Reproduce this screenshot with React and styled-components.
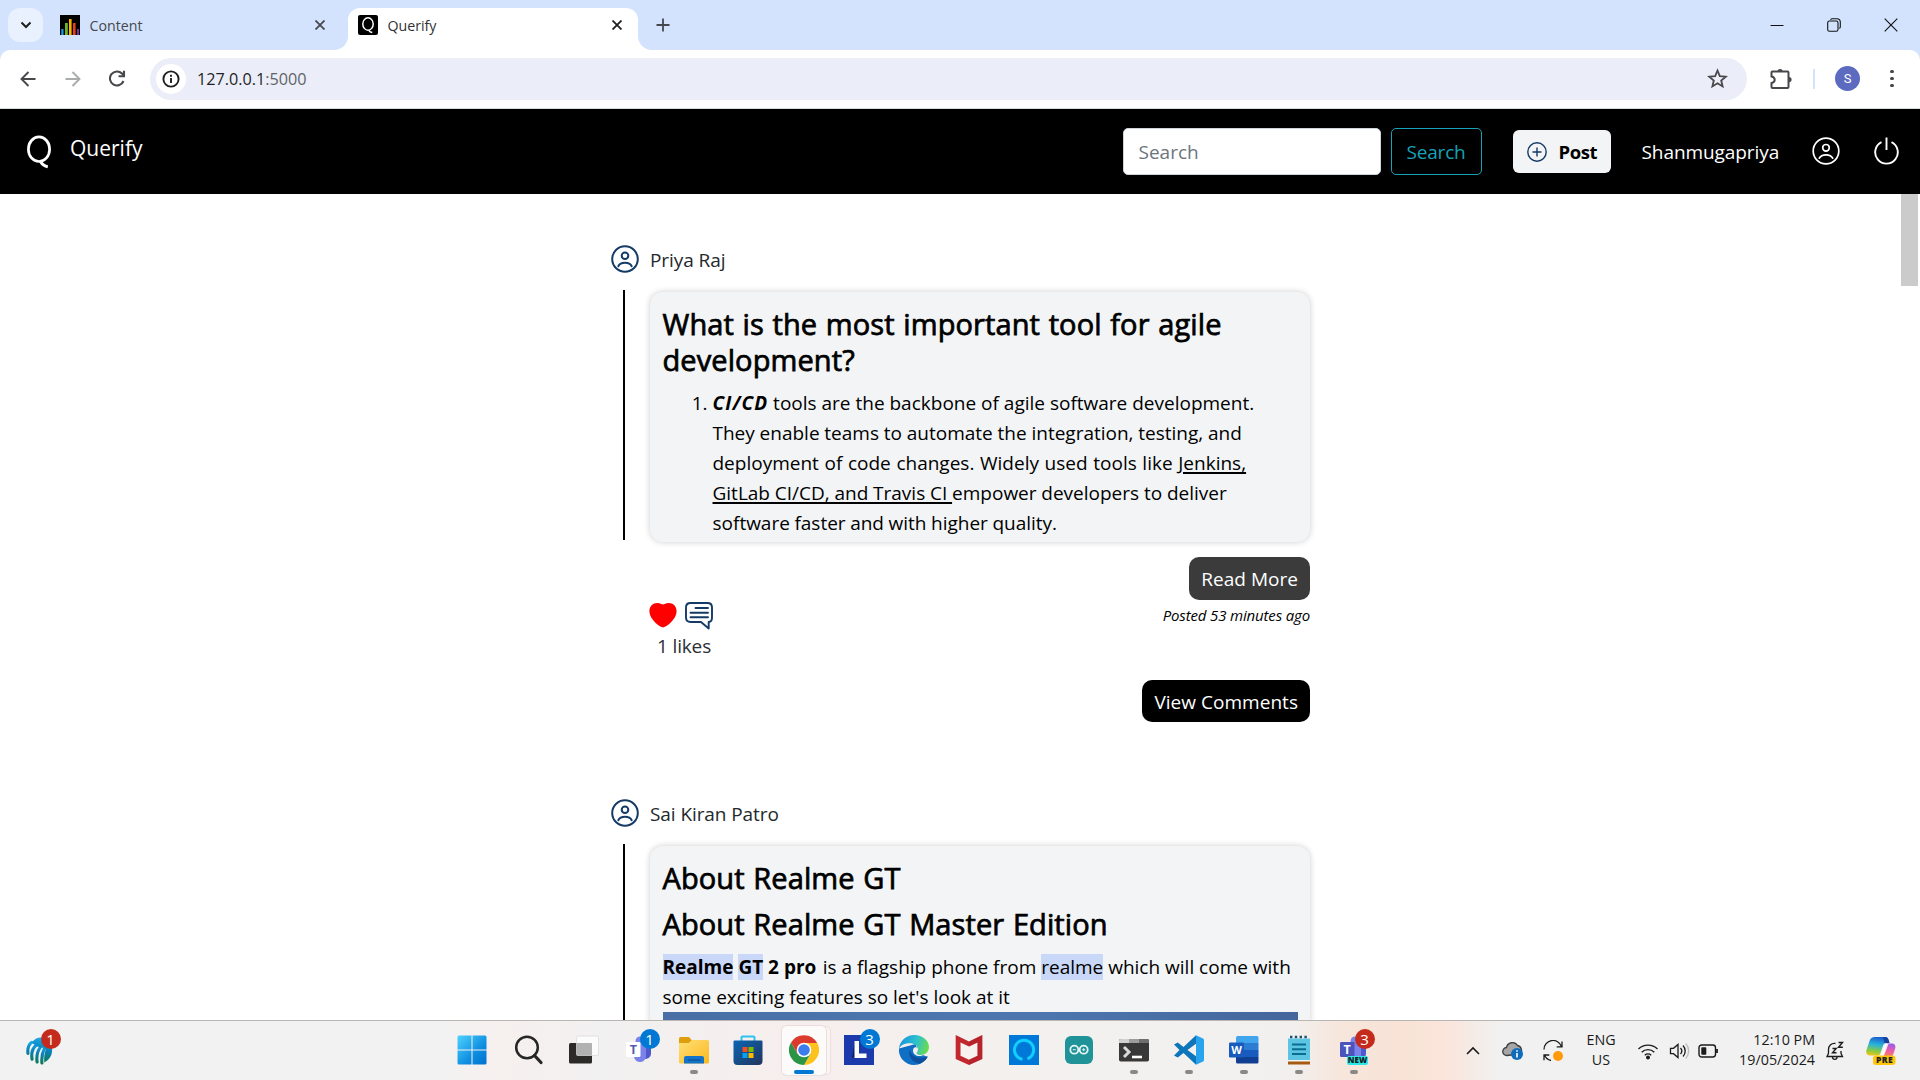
import React from 'react';
import styled, { createGlobalStyle, css } from 'styled-components';

const Global = createGlobalStyle`
  *, *::before, *::after { box-sizing: border-box; }
  body { margin: 0; overflow: hidden; background: #fff; }
  svg { display: block; flex: none; }
`;

const Screen = styled.div`
  width: 1920px;
  height: 1080px;
  display: flex;
  flex-direction: column;
  overflow: hidden;
  font-family: "Open Sans", "Noto Sans", sans-serif;
  font-size: 19px;
  color: #000;
  background: #fff;
`;

/* ---------- browser chrome ---------- */
const TabStrip = styled.div`
  height: 50px;
  flex: none;
  display: flex;
  align-items: flex-start;
  padding: 8px 1px 0 8px;
  background: #d3e3fd;
`;

const TabSearch = styled.div`
  width: 35px;
  height: 34px;
  border-radius: 12px;
  background: #e9f1fe;
  display: flex;
  align-items: center;
  justify-content: center;
`;

const Tab = styled.div`
  position: relative;
  height: 42px;
  display: flex;
  align-items: center;
  padding-bottom: 8px;
  font-size: 14.2px;
  color: #46484b;
  padding-left: 10px;
  padding-right: ${(p) => p.$end}px;
  width: ${(p) => p.$width}px;
  margin-left: ${(p) => p.$gap}px;
  ${(p) =>
    p.$active &&
    css`
      background: #fff;
      border-radius: 12px 12px 0 0;
      color: #303235;
      &::before,
      &::after {
        content: '';
        position: absolute;
        bottom: 0;
        width: 14px;
        height: 14px;
      }
      &::before {
        left: -14px;
        background: radial-gradient(circle at 0 0, transparent 13.5px, #fff 14.5px);
      }
      &::after {
        right: -14px;
        background: radial-gradient(circle at 100% 0, transparent 13.5px, #fff 14.5px);
      }
    `}
`;

const TabTitle = styled.span`
  flex: 1;
  margin: 1px 0 0 9.5px;
  line-height: 20px;
`;

const NewTab = styled.div`
  margin-left: 18px;
  width: 14px;
  height: 34px;
  display: flex;
  align-items: center;
`;

const WindowControls = styled.div`
  margin-left: auto;
  height: 34px;
  display: flex;
  align-items: center;
`;

const WindowButton = styled.div`
  width: 57px;
  display: flex;
  justify-content: center;
`;

const ToolbarBack = styled.div`
  flex: none;
  background: #d3e3fd;
`;

const Toolbar = styled.div`
  height: 59px;
  display: flex;
  align-items: center;
  padding: 0 16px 1px 15px;
  background: #fff;
  border-radius: 10px 10px 0 0;
  border-bottom: 1px solid #d5dedd;
`;

const NavIcon = styled.div`
  width: 26px;
  height: 26px;
  margin-right: 19px;
  display: flex;
  align-items: center;
  justify-content: center;
`;

const Omnibox = styled.div`
  width: 1597px;
  height: 42px;
  border-radius: 21px;
  background: #ebeef8;
  display: flex;
  align-items: center;
  padding: 0 19px 0 6px;
`;

const SiteInfo = styled.div`
  width: 30px;
  height: 30px;
  border-radius: 50%;
  background: #fff;
  display: flex;
  align-items: center;
  justify-content: center;
`;

const Url = styled.span`
  flex: 1;
  margin: 1px 0 0 11px;
  font-size: 16.2px;
  line-height: 24px;
  color: #1f1f1f;
  span { color: #5f6368; }
`;

const ToolbarActions = styled.div`
  flex: 1;
  display: flex;
  align-items: center;
  padding-left: 23px;
`;

const Divider = styled.div`
  width: 2px;
  height: 20px;
  margin: 0 20px 0 21px;
  background: #d3e3fd;
`;

const Avatar = styled.div`
  width: 25px;
  height: 25px;
  border-radius: 50%;
  background: #5c6bc0;
  color: #fff;
  font: 13px/25px Roboto, sans-serif;
  text-align: center;
`;

const Dots = styled.div`
  margin-left: auto;
  margin-right: 10px;
  display: grid;
  gap: 3.3px;
  i { width: 3.8px; height: 3.8px; border-radius: 50%; background: #454746; }
`;

/* ---------- site header ---------- */
const SiteHeader = styled.header`
  height: 85px;
  flex: none;
  display: flex;
  align-items: center;
  background: #000;
  color: #fff;
  padding: 0 21.5px 0 26px;
`;

const Brand = styled.div`
  flex: 1;
  display: flex;
  align-items: center;
  font-size: 21px;
  line-height: 30px;
  span { margin: -7px 0 0 18px; }
`;

const SearchInput = styled.div`
  width: 258px;
  height: 47px;
  border: 1px solid #ced4da;
  border-radius: 5px;
  background: #fff;
  color: #6c757d;
  line-height: 46px;
  padding-left: 15px;
`;

const SearchButton = styled.div`
  width: 91px;
  height: 47px;
  margin-left: 10px;
  border: 1px solid #17a2b8;
  border-radius: 5px;
  color: #17a2b8;
  line-height: 46px;
  text-align: center;
  letter-spacing: -0.2px;
`;

const PostButton = styled.div`
  width: 98px;
  height: 43px;
  margin: 0 0 0 31px;
  border-radius: 6px;
  background: #f2f4f6;
  color: #000;
  font-weight: 700;
  font-size: 18.5px;
  letter-spacing: -0.4px;
  display: flex;
  align-items: center;
  padding-left: 14px;
  gap: 12px;
`;

const UserName = styled.span`
  width: 137px;
  margin: 1px 33px 0 31px;
  letter-spacing: -0.08px;
  white-space: nowrap;
`;

const HeaderIcon = styled.div`
  margin: -1px 0 0 ${(p) => p.$left || 0}px;
`;

/* ---------- feed ---------- */
const Page = styled.main`
  flex: 1;
  min-height: 0;
  display: flex;
  overflow: hidden;
`;

const Feed = styled.div`
  flex: 1;
  padding: 51px 0 0 611px;
`;

const Scrollbar = styled.div`
  width: 19px;
  &::before {
    content: '';
    display: block;
    width: 17px;
    height: 92px;
    background: #cbcbcb;
  }
`;

const Post = styled.article`
  width: 699px;
  height: 553.5px;
`;

const Author = styled.div`
  display: flex;
  align-items: center;
  height: 28px;
  gap: 11px;
  color: #24282c;
  letter-spacing: -0.08px;
  span { line-height: 30px; margin-top: 2px; }
`;

const Thread = styled.div`
  display: flex;
  margin-top: 17px;
`;

const ThreadLine = styled.div`
  width: 2px;
  height: 250px;
  margin: 0 25px 0 12px;
  background: #000;
`;

const Card = styled.div`
  width: 660px;
  height: 250px;
  margin-top: 2px;
  padding: 14px 12px 0 12.5px;
  overflow: hidden;
  border-radius: 13px;
  background: #f2f4f6;
  box-shadow: 0 0 6px rgba(0, 0, 0, 0.2);
`;

const Title = styled.h4`
  margin: 0 0 10px;
  font-size: 29px;
  line-height: 36px;
  font-weight: 500;
  letter-spacing: 0.1px;
  word-spacing: 1px;
  -webkit-text-stroke: 0.75px #000;
`;

const Answer = styled.ol`
  margin: 0;
  padding-left: 50px;
  line-height: 30px;
  li { white-space: nowrap; }
`;

const Term = styled.b`
  font-style: italic;
  letter-spacing: 1.1px;
`;

const Line = styled.span`
  display: block;
  word-spacing: ${(p) => p.$space || 0}px;
`;

const Underlined = styled.u`
  text-decoration-thickness: 2px;
  text-underline-offset: 2px;
`;

const Paragraph = styled.p`
  margin: 0;
  line-height: 30px;
  white-space: nowrap;
  b { margin-right: 1.5px; }
`;

const Mark = styled.mark`
  background: #c9d7f8;
  color: inherit;
  font-weight: inherit;
`;

const Photo = styled.div`
  height: 300px;
  margin-top: 0.5px;
  background: linear-gradient(90deg, #486ea5, #4c75ad 35%, #4d76ae 60%, #44669c);
`;

const PostFooter = styled.div`
  margin-left: 39px;
  display: flex;
  justify-content: space-between;
`;

const Reactions = styled.div`
  padding-top: 60px;
`;

const ReactionIcons = styled.div`
  display: flex;
  gap: 8px;
  margin-left: -1px;
`;

const Likes = styled.div`
  margin: 2px 0 0 7px;
  line-height: 28px;
  color: #2b2f33;
  letter-spacing: -0.15px;
`;

const Meta = styled.div`
  display: flex;
  flex-direction: column;
  align-items: flex-end;
  padding-top: 15px;
`;

const Pill = styled.div`
  height: ${(p) => p.$height}px;
  padding: 0 12px;
  border-radius: 10px;
  background: ${(p) => p.$bg};
  color: #fff;
  line-height: ${(p) => p.$height + 2}px;
  letter-spacing: 0.03px;
  white-space: nowrap;
`;

const Posted = styled.div`
  margin: 3px 0 52px;
  font-size: 15px;
  line-height: 25px;
  font-style: italic;
  letter-spacing: -0.15px;
`;

/* ---------- taskbar ---------- */
const Taskbar = styled.footer`
  height: 60px;
  flex: none;
  display: flex;
  border-top: 1px solid #b9b6b4;
  background: linear-gradient(
    90deg,
    #f2f2f2 0,
    #f2f2f2 440px,
    #f6f0ee 500px,
    #f2f1f1 600px,
    #f4efee 720px,
    #f6eeed 800px,
    #f4f0ed 930px,
    #f2f1ef 1150px,
    #f2f0ef 1290px,
    #f7e6dc 1340px,
    #f8e3d6 1400px,
    #fbe5db 1445px,
    #f4ece7 1475px,
    #f1f1f1 1500px
  );
`;

const Cell = styled.div`
  position: relative;
  width: 55px;
  height: 59px;
  display: flex;
  align-items: center;
  justify-content: center;
  margin-left: ${(p) => p.$left || 0}px;
`;

const AppTile = styled.div`
  width: 44px;
  height: 49px;
  display: flex;
  align-items: center;
  justify-content: center;
  border-radius: 5px;
  margin-top: -1px;
  padding-right: ${(p) => p.$shift || 0}px;
  background: ${(p) => (p.$on ? 'rgba(255,255,255,0.72)' : 'transparent')};
  box-shadow: ${(p) => (p.$on ? '0 0 0 1px #e9dedd, 5px 0 0 -1px #faf4f3, 5px 0 0 0 #ebdfdf' : 'none')};
`;

const Running = styled.div`
  position: absolute;
  top: 49px;
  width: ${(p) => (p.$on ? 20 : 8)}px;
  height: 4px;
  border-radius: 2px;
  background: ${(p) => (p.$on ? '#0078d4' : '#8a8886')};
`;

const Badge = styled.div`
  position: absolute;
  left: 28.5px;
  top: 8px;
  width: 20px;
  height: 20px;
  border-radius: 50%;
  background: ${(p) => p.$bg};
  color: #fff;
  font-size: 15px;
  line-height: 20px;
  text-align: center;
`;

const Tray = styled.div`
  display: flex;
  margin-left: 72px;
  height: 59px;
  align-items: center;
`;

const Slot = styled.div`
  width: ${(p) => p.$w}px;
  display: flex;
  justify-content: ${(p) => (p.$end ? 'flex-end' : 'center')};
  text-align: ${(p) => (p.$end ? 'right' : 'center')};
  font-size: 14.3px;
  line-height: 20px;
  color: #1b1b1b;
  white-space: nowrap;
  padding-bottom: ${(p) => (p.$text ? 2 : 0)}px;
`;

/* ---------- drawings ---------- */
const Cross = ({ size = 9, w = 1.8, color = '#46484b' }) => (
  <svg width={size} height={size} viewBox="0 0 10 10" stroke={color} strokeWidth={w} fill="none">
    <path d="M.5.5l9 9M9.5.5l-9 9" />
  </svg>
);

const Person = ({ size = 28, color = '#143a66', w = 2 }) => (
  <svg width={size} height={size} viewBox="0 0 28 28" fill="none" stroke={color} strokeWidth={w}>
    <circle cx="14" cy="14" r="12.8" />
    <circle cx="14" cy="10.8" r="3.3" />
    <path d="M7.3 21.2c2.2-4.5 11.2-4.5 13.4 0" strokeLinecap="round" />
  </svg>
);

const Heart = () => (
  <svg width="28" height="27" viewBox="0 0 28 27">
    <path
      fill="#f00"
      d="M14 25.5C11.5 25.5.8 18 .4 9.8.2 4 4 1 8.3 1c3 0 4.4 1.500 5.700 1.500S16.700 1 19.700 1c4.300 0 8.100 3 7.900 8.800C27.200 18 16.500 25.500 14 25.500Z"
    />
  </svg>
);

const CommentIcon = () => (
  <svg width="28" height="28" viewBox="0 0 28 28" fill="none" stroke="#143a66" strokeWidth="1.9" strokeLinejoin="round" strokeLinecap="round">
    <path d="M5.500 1h17C25.500 1 27 2.500 27 5.500v10c0 3-1.500 4.500-3.300 4.500v6.500L16 20H5.500C2.500 20 1 18.500 1 15.500v-10C1 2.500 2.500 1 5.500 1Z" />
    <path d="M10.500 6h12.500M5.500 10.700H23M5.500 15.300H23" />
  </svg>
);

const QLogo = () => (
  <svg width="26" height="34" viewBox="0 0 26 34" fill="none" stroke="#fff">
    <ellipse cx="13" cy="14.200" rx="10.600" ry="12.300" strokeWidth="2.700" />
    <path d="M14.500 26.500c1.800 3.200 4 4.800 7.300 5.300" strokeWidth="3" />
  </svg>
);

const ContentFavicon = () => (
  <svg width="20" height="20" viewBox="0 0 20 20">
    <path fill="#000" d="M0 0h20v20H0z" />
    <path fill="#1e9be9" d="M1.300 14h2.200v6H1.300z" />
    <path fill="#6db52d" d="M5 8h2.800v12H5z" />
    <path fill="#f7b500" d="M9 4h2.600v16H9z" />
    <path fill="#e5401c" d="M13 8h2.600v12H13z" />
    <path fill="#7a2a9c" d="M17 14h2v6h-2z" />
  </svg>
);

const QFavicon = () => (
  <svg width="20" height="20" viewBox="0 0 20 20" fill="none">
    <rect width="20" height="20" rx="2" fill="#000" />
    <ellipse cx="10" cy="9" rx="5.200" ry="6.200" stroke="#fff" strokeWidth="1.500" />
    <path d="M10.800 15.300c.8 1.400 1.900 2 3.500 2.300" stroke="#fff" strokeWidth="1.500" />
  </svg>
);

const Cricket = () => (
  <svg width="27" height="29" viewBox="0 0 28 30">
    <defs>
      <linearGradient id="ck" x1=".6" y1="0" x2=".4" y2="1">
        <stop offset="0" stopColor="#19b0f0" />
        <stop offset=".5" stopColor="#0b7fb5" />
        <stop offset="1" stopColor="#0a7a4c" />
      </linearGradient>
    </defs>
    <path
      fill="none"
      stroke="url(#ck)"
      strokeWidth="3.200"
      strokeLinecap="round"
      d="M2 18c-.5-5 .5-9 4-11.500M6.300 24c-1-6 0-11 4.200-14.500M11.500 27c-.8-6 0-11 3.500-15.500M16.500 28c-.5-6 0-10 2.500-15"
    />
    <path fill="url(#ck)" d="M6 7C9 2 14 .500 19 2c6 2 9 8 8 14-.5 5-3.500 9-8 11.500-.5-5 0-9 1.500-13.500-1.500-1.500-3.500-2.500-5-2l-4.500-1.500z" />
  </svg>
);

const WindowsLogo = () => (
  <svg width="30" height="30" viewBox="0 0 30 30">
    <defs>
      <linearGradient id="wn" x1="0" y1="0" x2="1" y2="1">
        <stop offset="0" stopColor="#4fd2ff" />
        <stop offset=".6" stopColor="#0f8fe0" />
        <stop offset="1" stopColor="#0070cf" />
      </linearGradient>
    </defs>
    <path fill="url(#wn)" d="M.500 2a1.500 1.500 0 0 1 1.500-1.500h12.500v14H.500zM15.500.500H28a1.500 1.500 0 0 1 1.500 1.500v12.500h-14zM.500 15.500h14v14H2A1.500 1.500 0 0 1 .500 28zM15.500 15.500h14V28a1.500 1.500 0 0 1-1.500 1.500H15.500z" />
  </svg>
);

const Magnifier = () => (
  <svg width="30" height="30" viewBox="0 0 30 30" fill="none" stroke="#262626">
    <circle cx="13" cy="12.500" r="10.800" strokeWidth="2.500" />
    <path d="M20.500 20.500l6.500 7" strokeWidth="3.200" strokeLinecap="round" />
  </svg>
);

const TaskView = () => (
  <svg width="30" height="30" viewBox="0 0 30 30">
    <rect x="0" y="8" width="23" height="20.500" rx="1.500" fill="#2b2a29" />
    <rect x="7.500" y="1" width="22" height="19.500" rx="1.500" fill="#fff" fillOpacity=".72" stroke="#dcdcdc" strokeWidth=".8" />
    <path d="M7.500 8H23v12.500H7.500z" fill="#a9a9a9" opacity=".7" />
  </svg>
);

const Teams = ({ isNew }) => (
  <svg width="30" height="30" viewBox="0 0 30 30">
    <circle cx="16" cy="6" r="4.500" fill="#7b83eb" />
    <path d="M18 9h9v10a5 5 0 0 1-7 4.500z" fill="#5059c9" />
    <path d="M10 9h12v11a6 6 0 0 1-12 2z" fill="#7b83eb" />
    <rect x={isNew ? 1 : 2} y="7" width="14.500" height="15" rx="1.200" fill={isNew ? '#4b53bc' : '#fff'} />
    <text x={isNew ? 8.2 : 9.3} y="19" fontSize="12.500" fontWeight="700" textAnchor="middle" fill={isNew ? '#fff' : '#5558af'}>T</text>
    {isNew && (
      <g>
        <rect x="8" y="21" width="21" height="9" rx="2" fill="#2ce8e6" />
        <text x="18.500" y="28.400" fontSize="8" fontWeight="800" textAnchor="middle" fill="#10201f">NEW</text>
      </g>
    )}
  </svg>
);

const Explorer = () => (
  <svg width="30" height="30" viewBox="0 0 30 30">
    <defs>
      <linearGradient id="ex" x1="0" y1="0" x2="1" y2="1">
        <stop offset="0" stopColor="#ffe07a" />
        <stop offset="1" stopColor="#fbb81c" />
      </linearGradient>
    </defs>
    <path fill="#dd9f0c" d="M0 3.500A1.500 1.500 0 0 1 1.500 2H10l3 3.500L9 9H0z" />
    <path fill="url(#ex)" d="M0 8h10l3-3h15.500A1.500 1.500 0 0 1 30 6.500V27a1.500 1.500 0 0 1-1.500 1.500h-27A1.500 1.500 0 0 1 0 27z" />
    <path fill="#1273c8" d="M5 28.500V23a2 2 0 0 1 2-2h16a2 2 0 0 1 2 2v5.500z" />
    <path stroke="#0b4f94" strokeWidth="1.200" d="M9 25h12.500" />
  </svg>
);

const Store = () => (
  <svg width="30" height="30" viewBox="0 0 30 30">
    <defs>
      <linearGradient id="st" x1="0" y1="0" x2="1" y2="1">
        <stop offset="0" stopColor="#0a66b5" />
        <stop offset="1" stopColor="#23345c" />
      </linearGradient>
    </defs>
    <path d="M8.500 6V2.500A1 1 0 0 1 9.500 1.500h11a1 1 0 0 1 1 1V6" fill="none" stroke="#2cc3f2" strokeWidth="2" />
    <path fill="url(#st)" d="M.500 6.500A1 1 0 0 1 1.500 5.500h27a1 1 0 0 1 1 1V26a4 4 0 0 1-4 4h-21a4 4 0 0 1-4-4z" />
    <path fill="#f25022" d="M9.500 12h5v5h-5z" />
    <path fill="#7fba00" d="M15.500 12h5v5h-5z" />
    <path fill="#00a4ef" d="M9.500 18h5v5h-5z" />
    <path fill="#ffb900" d="M15.500 18h5v5h-5z" />
  </svg>
);

const Chrome = () => (
  <svg width="30" height="30" viewBox="0 0 30 30">
    <path fill="#fcc31e" d="M15 7.500h13A15 15 0 0 1 15 30l6.500-11.300z" />
    <path fill="#2a9447" d="M2 7.500A15 15 0 0 0 15 30l6.500-11.300L15 15l-6.500 3.700z" />
    <path fill="#dd3a2e" d="M2 7.500l6.500 11.200L15 8h13.100A15 15 0 0 0 2 7.500z" />
    <circle cx="15" cy="15" r="7.300" fill="#fff" />
    <circle cx="15" cy="15" r="5.800" fill="#3b7ded" />
  </svg>
);

const LApp = () => (
  <svg width="30" height="30" viewBox="0 0 30 30">
    <path fill="#1d3aad" d="M0 0h30v30H0z" />
    <path fill="#0d1f5e" d="M8 22.500L11 6v14l9 3z" />
    <path fill="#fff" d="M10.500 6h4.500v12.500h7.500V23h-12z" />
  </svg>
);

const Edge = () => (
  <svg width="30" height="30" viewBox="0 0 30 30">
    <defs>
      <linearGradient id="eg" x1="0" y1=".3" x2="1" y2=".5">
        <stop offset="0" stopColor="#1793dd" />
        <stop offset=".55" stopColor="#2cc0cf" />
        <stop offset="1" stopColor="#6bdc4d" />
      </linearGradient>
    </defs>
    <path fill="#0f6fc4" d="M0 13.500A15 15 0 0 0 15 30c6 0 11-3.500 13.500-8l-9-4-3-9z" />
    <path fill="url(#eg)" d="M0 13.500C1 5.500 7.500 0 15 0c9 0 15 6 15 12 0 5-4 8-8 8-3 0-5-1.200-4.200-2.500 1-1.200 1.300-2.500 1-3.800C18 9.500 13.500 8 9.500 8.300 5 8.600 1.500 10.500 0 13.500Z" />
    <path fill="#0d4f9e" d="M10.500 15c-1.500 6 3 12.500 10 13.800C24 27.500 27 25 28.500 22c.3-.7-.3-1-.9-.6C20 25 12.500 21.500 10.500 15Z" />
    <path fill="#f3efee" d="M18.800 13.700c.3 1.300 0 2.600-1 3.800-.8 1.300 1.200 2.500 4.200 2.500 1 0 2-.2 3-.5-4 3-11 1.500-11-4 0-3 2.500-4.500 4.800-1.800Z" />
  </svg>
);

const McAfee = () => (
  <svg width="28" height="30" viewBox="0 0 28 30">
    <path fill="#c1272d" d="M.700 0L14 6.500 27.300 0v24L14 30 .700 24z" />
    <path fill="#f7f1ef" d="M5.500 7.500L14 11.500l8.500-4V20.700L14 24.700 5.500 20.700z" />
    <path fill="#a51d26" d="M14 6.500L27.300 0v24L14 30v-5.300l8.500-4V7.500L14 11.500z" opacity=".35" />
  </svg>
);

const Alexa = () => (
  <svg width="30" height="30" viewBox="0 0 30 30" fill="none">
    <path fill="#0078d7" d="M0 0h30v30H0z" />
    <path d="M13.500 24.300A9.600 9.600 0 1 1 18.500 23.800" stroke="#0fd0ff" strokeWidth="3" />
  </svg>
);

const Arduino = () => (
  <svg width="28" height="28" viewBox="0 0 28 28" fill="none">
    <rect width="28" height="28" rx="6" fill="#1f9398" />
    <circle cx="9.300" cy="13.700" r="4" stroke="#e6f4f4" strokeWidth="1.800" />
    <circle cx="18.700" cy="13.700" r="4" stroke="#e6f4f4" strokeWidth="1.800" />
    <path d="M7.800 13.700h3M17.200 13.700h3M18.700 12.200v3" stroke="#e6f4f4" />
  </svg>
);

const Terminal = () => (
  <svg width="30" height="30" viewBox="0 0 30 30" fill="none">
    <rect y="4" width="30" height="22.500" rx="1.800" fill="#383838" />
    <path fill="#d0d0d0" d="M0 8V5.800A1.800 1.800 0 0 1 1.800 4H10v4z" />
    <path fill="#9c9c9c" d="M10 4h10v4H10z" />
    <path fill="#6e6e6e" d="M20 4h8.200A1.800 1.800 0 0 1 30 5.800V8H20z" />
    <path d="M5 12l5 5-5 5" stroke="#d8d8d8" strokeWidth="3" />
    <path d="M13 22h10" stroke="#fff" strokeWidth="2.600" />
  </svg>
);

const VsCode = () => (
  <svg width="30" height="30" viewBox="0 0 30 30">
    <path fill="#0d75ba" d="M22 .3L9.500 12 3.800 7.600 0 9.500 5.500 15 0 20.500l3.800 1.900L9.500 18 22 29.700v-8.500L13.500 15 22 8.800z" />
    <path fill="#28a3ee" d="M22 .3L29 3.500a1.800 1.800 0 0 1 1 1.600v19.800a1.800 1.800 0 0 1-1 1.600L22 29.700z" />
  </svg>
);

const Word = () => (
  <svg width="30" height="30" viewBox="0 0 30 30">
    <path fill="#41a5ee" d="M8 1h20a1.500 1.500 0 0 1 1.500 1.500V8H7V2.500z" />
    <path fill="#2b7cd3" d="M7 8h22.500v7H7z" />
    <path fill="#185abd" d="M7 15h22.500v7H7z" />
    <path fill="#103f91" d="M7 22h22.500v5a1.500 1.500 0 0 1-1.500 1.500H8.500A1.500 1.500 0 0 1 7 27z" />
    <rect x="0" y="7.500" width="15" height="15" rx="1.200" fill="#185abd" />
    <text x="7.500" y="19" fontSize="11" fontWeight="700" textAnchor="middle" fill="#fff">W</text>
  </svg>
);

const Notepad = () => (
  <svg width="24" height="30" viewBox="0 0 24 30">
    <path fill="#a65a12" d="M1 25h22v4.500H1z" />
    <path fill="#f4f4f4" d="M1 24h22v2.500H1z" />
    <path fill="#5cc6e2" d="M1 3.500h22V25H1z" />
    <path stroke="#0b6b93" strokeWidth="2" d="M5 9.500h14M5 14.300h14M5 19h14" />
    <path stroke="#1c4f6b" strokeWidth="2.400" strokeDasharray="2.400 2.400" d="M3 2h19" />
  </svg>
);

const Cloud = () => (
  <svg width="22" height="20" viewBox="0 0 22 20">
    <path d="M5 14.500A4 4 0 0 1 4.500 6.500 6 6 0 0 1 15.500 4.500 5 5 0 0 1 18 13z" fill="#a6a6a6" stroke="#3c3c3c" strokeWidth="1.300" />
    <circle cx="15" cy="13" r="6" fill="#0f6cbd" />
    <path stroke="#fff" strokeWidth="1.600" d="M15 12v4.500M15 9.300v1.500" />
  </svg>
);

const Sync = () => (
  <svg width="22" height="22" viewBox="0 0 22 22" fill="none" stroke="#1b1b1b" strokeWidth="1.300">
    <path d="M2 9.500A9 9 0 0 1 19.500 6.500M20 1.500V6.800h-5.300M9 20.500A9 9 0 0 1 2.500 15M2 20.300V15h5.300" />
    <circle cx="16" cy="16" r="5" fill="#ff9a0a" stroke="none" />
  </svg>
);

const Wifi = () => (
  <svg width="22" height="18" viewBox="0 0 22 18" fill="none" stroke="#1b1b1b" strokeWidth="1.400">
    <path d="M1.500 7a13.500 13.500 0 0 1 19 0M4.700 10.200a9 9 0 0 1 12.600 0M7.800 13.200a4.700 4.700 0 0 1 6.400 0" />
    <circle cx="11" cy="15.500" r="1.300" fill="#1b1b1b" />
  </svg>
);

const Volume = () => (
  <svg width="21" height="18" viewBox="0 0 21 18" fill="none" stroke="#1b1b1b" strokeWidth="1.300">
    <path d="M1.500 6.300h3L9 2.500v13L4.500 11.700h-3z" />
    <path d="M11.500 6a4.500 4.500 0 0 1 0 6M14 3.500a8 8 0 0 1 0 11" />
    <path d="M16.700 1.500a11 11 0 0 1 0 15" stroke="#bdbdbd" />
  </svg>
);

const Battery = () => (
  <svg width="21" height="14" viewBox="0 0 21 14" fill="none">
    <rect x="1" y="1" width="16.500" height="12" rx="2.700" stroke="#1b1b1b" strokeWidth="1.400" />
    <rect x="3.300" y="3.300" width="5" height="7.400" rx=".8" fill="#1b1b1b" />
    <path d="M19 5v4" stroke="#1b1b1b" strokeWidth="1.800" />
  </svg>
);

const Bell = () => (
  <svg width="20" height="20" viewBox="0 0 20 20" fill="none" stroke="#1b1b1b" strokeWidth="1.300">
    <path d="M10.500 2.500C6 2 3.500 5 3.500 8.500v3.800L2 15.500h15.500L16 12.300V10M7.500 16a2.300 2.300 0 0 0 4.600 0" />
    <path d="M7.500 7.500h3.700l-3.700 4.300h4M13.500 1.500h4l-4 4.700h4.300" strokeWidth="1.400" />
  </svg>
);

const Copilot = () => (
  <svg width="30" height="30" viewBox="0 0 30 30">
    <defs>
      <linearGradient id="cp" x1=".4" y1="0" x2=".2" y2="1">
        <stop offset="0" stopColor="#1b5fd0" />
        <stop offset=".4" stopColor="#2ab4d8" />
        <stop offset=".75" stopColor="#8ccb3e" />
        <stop offset="1" stopColor="#f5c518" />
      </linearGradient>
      <linearGradient id="cq" x1=".6" y1="0" x2=".4" y2="1">
        <stop offset="0" stopColor="#9b5be8" />
        <stop offset=".5" stopColor="#ef5fa6" />
        <stop offset="1" stopColor="#fb8b3c" />
      </linearGradient>
    </defs>
    <path fill="url(#cp)" d="M9 1h10c2 0 3 1 3.600 3l.9 3h-3c-2 0-3 1-3.600 3L14.500 17c-.7 2-1.500 2.500-3.500 2.500H4c-3 0-4.500-2-3.500-5.500L3.500 5C4.500 2 6 1 9 1Z" />
    <path fill="#16429e" d="M17 1h2c2 0 3 1 3.600 3l.9 3h-5z" />
    <path fill="url(#cq)" d="M21 7.500h5c3 0 4 2.500 3 5.500L27 19c-.8 2-2 3-4 3h-9c2 0 2.800-1 3.300-2.500L20 10z" />
    <path fill="#fff" d="M19.500 8h3L18 19.500c-.5 1-1 1.500-3 1.500l1-3z" opacity=".85" />
    <rect x="7" y="19.500" width="22.500" height="9.500" rx="3" fill="#ffc60a" />
    <text x="18.500" y="27.300" fontSize="8.600" fontWeight="800" textAnchor="middle" fill="#222" letterSpacing=".4">PRE</text>
  </svg>
);

const apps = [
  { id: 'start', icon: <WindowsLogo />, shift: 3 },
  { id: 'search', icon: <Magnifier /> },
  { id: 'tasks', icon: <TaskView /> },
  { id: 'teams', icon: <Teams />, badge: '1', tone: '#0078d4' },
  { id: 'files', icon: <Explorer />, running: true },
  { id: 'store', icon: <Store />, shift: 1 },
  { id: 'chrome', icon: <Chrome />, running: true, active: true },
  { id: 'l', icon: <LApp />, badge: '3', tone: '#0078d4' },
  { id: 'edge', icon: <Edge /> },
  { id: 'mcafee', icon: <McAfee /> },
  { id: 'alexa', icon: <Alexa /> },
  { id: 'arduino', icon: <Arduino /> },
  { id: 'terminal', icon: <Terminal />, running: true },
  { id: 'code', icon: <VsCode />, running: true },
  { id: 'word', icon: <Word />, running: true },
  { id: 'notepad', icon: <Notepad />, running: true },
  { id: 'teamsnew', icon: <Teams isNew />, badge: '3', tone: '#c42b1c', running: true },
];

export default function App() {
  return (
    <Screen>
      <Global />
      <TabStrip>
        <TabSearch>
          <svg width="12" height="8" viewBox="0 0 12 8" fill="none" stroke="#1f1f1f" strokeWidth="2">
            <path d="M1.500 1.500L6 6l4.500-4.500" />
          </svg>
        </TabSearch>
        <Tab $width={295} $gap={7} $end={20}>
          <ContentFavicon />
          <TabTitle>Content</TabTitle>
          <Cross size={10} />
        </Tab>
        <Tab $width={290} $gap={3} $end={16} $active>
          <QFavicon />
          <TabTitle>Querify</TabTitle>
          <Cross size={10} color="#1f1f1f" />
        </Tab>
        <NewTab>
          <svg width="14" height="14" viewBox="0 0 14 14" stroke="#46484b" strokeWidth="1.800">
            <path d="M7 .5v13M.5 7h13" />
          </svg>
        </NewTab>
        <WindowControls>
          <WindowButton>
            <svg width="14" height="14" viewBox="0 0 14 14" stroke="#111"><path d="M.5 7.500h13" /></svg>
          </WindowButton>
          <WindowButton>
            <svg width="14" height="14" viewBox="0 0 14 14" fill="none" stroke="#111" strokeWidth="1.100">
              <rect x=".700" y="3" width="10.300" height="10.300" rx="1.800" />
              <path d="M3.500 1.600C4 .900 4.500.700 5.300.700h4.500c2 0 3.500 1.500 3.500 3.500v4.500c0 .8-.3 1.300-.9 1.800" />
            </svg>
          </WindowButton>
          <WindowButton><Cross size={14} w={0.8} color="#111" /></WindowButton>
        </WindowControls>
      </TabStrip>

      <ToolbarBack>
        <Toolbar>
          <NavIcon>
            <svg width="16" height="16" viewBox="0 0 16 16" fill="none" stroke="#46484b" strokeWidth="1.900"><path d="M15.500 8H2M8.500 1L1.500 8l7 7" /></svg>
          </NavIcon>
          <NavIcon>
            <svg width="16" height="16" viewBox="0 0 16 16" fill="none" stroke="#a9abad" strokeWidth="1.900"><path d="M.5 8H14M7.500 1l7 7-7 7" /></svg>
          </NavIcon>
          <NavIcon>
            <svg width="18" height="17" viewBox="0 0 18 17" fill="none" stroke="#46484b" strokeWidth="2.100">
              <path d="M14.500 11A7 7 0 1 1 13 3.600L14.500 5.200" />
              <path d="M15 .8v5.400H9.600" />
            </svg>
          </NavIcon>
          <Omnibox>
            <SiteInfo>
              <svg width="18" height="18" viewBox="0 0 18 18" fill="none" stroke="#1f1f1f" strokeWidth="1.900">
                <circle cx="9" cy="9" r="7.600" />
                <path d="M9 8v5M9 4.800v1.900" />
              </svg>
            </SiteInfo>
            <Url>127.0.0.1<span>:5000</span></Url>
            <svg width="21" height="21" viewBox="0 0 21 21" fill="none" stroke="#46484b" strokeWidth="1.800">
              <path d="M10.500 2.500l2.300 5.600 6 .5-4.600 3.900 1.400 5.900-5.100-3.200-5.100 3.200 1.400-5.900L2.200 8.600l6-.5z" />
            </svg>
          </Omnibox>
          <ToolbarActions>
            <svg width="22" height="22" viewBox="0 0 22 22" fill="none" stroke="#46484b" strokeWidth="2">
              <path d="M2.500 3.500h15a1 1 0 0 1 1 1V19a1 1 0 0 1-1 1h-15a1 1 0 0 1-1-1v-4c2.300-.5 3.200-1.500 3.200-3.300S3.800 9 1.500 8.500v-4a1 1 0 0 1 1-1z" />
              <path fill="#46484b" stroke="none" d="M7.500 3.500a2.600 2.600 0 0 1 5.200 0zM19 9a2.600 2.600 0 0 1 0 5.200z" />
            </svg>
            <Divider />
            <Avatar>S</Avatar>
            <Dots><i /><i /><i /></Dots>
          </ToolbarActions>
        </Toolbar>
      </ToolbarBack>

      <SiteHeader>
        <Brand>
          <QLogo />
          <span>Querify</span>
        </Brand>
        <SearchInput>Search</SearchInput>
        <SearchButton>Search</SearchButton>
        <PostButton>
          <svg width="20" height="20" viewBox="0 0 20 20" fill="none" stroke="#143a66" strokeWidth="1.400">
            <circle cx="10" cy="10" r="9.200" />
            <path d="M10 5.500v9M5.500 10h9" />
          </svg>
          Post
        </PostButton>
        <UserName>Shanmugapriya</UserName>
        <HeaderIcon><Person color="#fff" w={1.7} /></HeaderIcon>
        <HeaderIcon $left={34}>
          <svg width="25" height="28" viewBox="0 0 25 28" fill="none" stroke="#fff" strokeWidth="1.900">
            <path d="M12.500.5v12.500M7.500 5.200a11.300 11.300 0 1 0 10 0" />
          </svg>
        </HeaderIcon>
      </SiteHeader>

      <Page>
        <Feed>
          <Post>
            <Author>
              <Person />
              <span>Priya Raj</span>
            </Author>
            <Thread>
              <ThreadLine />
              <Card>
                <Title>What is the most important tool for agile<br />development?</Title>
                <Answer>
                  <li>
                    <Line><Term>CI/CD</Term> tools are the backbone of agile software development.</Line>
                    <Line $space={-0.15}>They enable teams to automate the integration, testing, and</Line>
                    <Line $space={0.7}>deployment of code changes. Widely used tools like <Underlined>Jenkins,</Underlined></Line>
                    <Line $space={-0.15}><Underlined>GitLab CI/CD, and Travis CI </Underlined>empower developers to deliver</Line>
                    <Line $space={-0.4}>software faster and with higher quality.</Line>
                  </li>
                </Answer>
              </Card>
            </Thread>
            <PostFooter>
              <Reactions>
                <ReactionIcons><Heart /><CommentIcon /></ReactionIcons>
                <Likes>1 likes</Likes>
              </Reactions>
              <Meta>
                <Pill $height={43} $bg="#3b3b3b">Read More</Pill>
                <Posted>Posted 53 minutes ago</Posted>
                <Pill $height={42} $bg="#000">View Comments</Pill>
              </Meta>
            </PostFooter>
          </Post>
          <Post>
            <Author>
              <Person />
              <span>Sai Kiran Patro</span>
            </Author>
            <Thread>
              <ThreadLine />
              <Card>
                <Title>About Realme GT</Title>
                <Title>About Realme GT Master Edition</Title>
                <Paragraph>
                  <b><Mark>Realme</Mark> <Mark>GT</Mark> 2 pro</b> is a flagship phone from <Mark>realme</Mark> which will come with<br />
                  some exciting features so let's look at it
                </Paragraph>
                <Photo />
              </Card>
            </Thread>
          </Post>
        </Feed>
        <Scrollbar />
      </Page>

      <Taskbar>
        <Cell $left={12}>
          <Cricket />
          <Badge $bg="#c42b1c">1</Badge>
        </Cell>
        {apps.map((a, i) => (
          <Cell key={a.id} $left={i === 0 ? 379 : 0}>
            <AppTile $on={a.active} $shift={a.shift}>{a.icon}</AppTile>
            {a.badge && <Badge $bg={a.tone}>{a.badge}</Badge>}
            {a.running && <Running $on={a.active} />}
          </Cell>
        ))}
        <Tray>
          <Slot $w={40}>
            <svg width="14" height="9" viewBox="0 0 14 9" fill="none" stroke="#1b1b1b" strokeWidth="1.600"><path d="M1 8l6-6 6 6" /></svg>
          </Slot>
          <Slot $w={40}><Cloud /></Slot>
          <Slot $w={40}><Sync /></Slot>
          <Slot $w={56} $text>ENG<br />US</Slot>
          <Slot $w={38}><Wifi /></Slot>
          <Slot $w={24}><Volume /></Slot>
          <Slot $w={34}><Battery /></Slot>
          <Slot $w={90} $end $text>12:10 PM<br />19/05/2024</Slot>
          <Slot $w={40}><Bell /></Slot>
          <Slot $w={52}><Copilot /></Slot>
        </Tray>
      </Taskbar>
    </Screen>
  );
}
